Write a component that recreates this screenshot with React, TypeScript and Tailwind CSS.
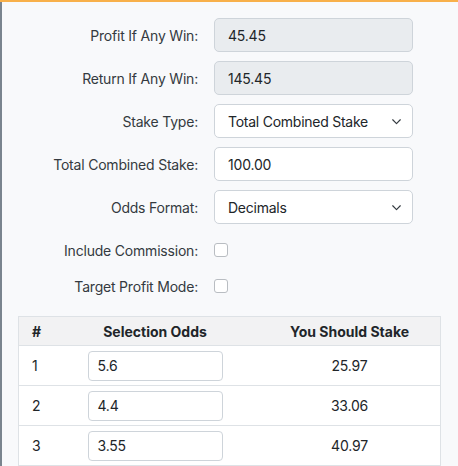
import React from 'react';

const font = { fontFamily: 'Inter, "Noto Sans", sans-serif' };

function ChevronDown() {
  return (
    <svg width="11" height="11" viewBox="0 0 16 16" fill="none" className="text-[#343a40]">
      <path d="M2.5 5.5l5.5 5.5 5.5-5.5" stroke="currentColor" strokeWidth="1.7" strokeLinecap="round" strokeLinejoin="round" />
    </svg>
  );
}

function FieldRow({ label, children }: { label: string; children: React.ReactNode }) {
  return (
    <div className="flex h-[34px] items-center">
      <div className="w-[196px] text-right text-[14px] tracking-[-0.2px] text-[#343a40]">{label}</div>
      <div className="ml-[16px] w-[199px]">{children}</div>
    </div>
  );
}

function ReadOnlyBox({ value }: { value: string }) {
  return (
    <div className="flex h-[34px] items-center rounded-[5px] border border-[#ced4da] bg-[#e9ecef] px-[13px] text-[14px] tracking-[-0.2px] text-[#212529]">
      {value}
    </div>
  );
}

function TextBox({ value }: { value: string }) {
  return (
    <div className="flex h-[34px] items-center rounded-[5px] border border-[#ced4da] bg-white px-[13px] text-[14px] tracking-[-0.2px] text-[#212529]">
      {value}
    </div>
  );
}

function SelectBox({ value }: { value: string }) {
  return (
    <div className="flex h-[34px] items-center justify-between rounded-[5px] border border-[#ced4da] bg-white pl-[13px] pr-[10px] text-[14px] tracking-[-0.25px] text-[#212529]">
      <span>{value}</span>
      <ChevronDown />
    </div>
  );
}

function CheckRow({ label }: { label: string }) {
  return (
    <div className="flex h-[20px] items-center">
      <div className="w-[196px] text-right text-[14px] tracking-[-0.2px] text-[#343a40]">{label}</div>
      <div className="ml-[16px] h-[14px] w-[14px] rounded-[3px] border border-[#b9bdc2] bg-white" />
    </div>
  );
}

const rows = [
  { n: 1, odds: '5.6', stake: '25.97' },
  { n: 2, odds: '4.4', stake: '33.06' },
  { n: 3, odds: '3.55', stake: '40.97' },
];

export default function App() {
  return (
    <div className="flex h-[466px] w-[458px] flex-col overflow-hidden bg-[#f8f9fb]" style={font}>
      <div className="h-[2px] w-full bg-[#f8b04a]" />
      <div className="flex flex-1">
        <div className="w-[2px] bg-[#7a848e]" />
        <div className="flex flex-1 flex-col pt-[16px]">
          <div className="flex flex-col gap-[9px]">
            <FieldRow label="Profit If Any Win:">
              <ReadOnlyBox value="45.45" />
            </FieldRow>
            <FieldRow label="Return If Any Win:">
              <ReadOnlyBox value="145.45" />
            </FieldRow>
            <FieldRow label="Stake Type:">
              <SelectBox value="Total Combined Stake" />
            </FieldRow>
            <FieldRow label="Total Combined Stake:">
              <TextBox value="100.00" />
            </FieldRow>
            <FieldRow label="Odds Format:">
              <SelectBox value="Decimals" />
            </FieldRow>
          </div>
          <div className="mt-[16px] flex flex-col gap-[16px]">
            <CheckRow label="Include Commission:" />
            <CheckRow label="Target Profit Mode:" />
          </div>
          <div className="ml-[16px] mt-[20px] w-[423px] border border-b-0 border-[#dee2e6] text-[14px] text-[#212529]">
            <div className="flex h-[29px] items-center border-b border-[#dee2e6] bg-[#f2f2f3] font-bold">
              <div className="w-[56px] pl-[13px]">#</div>
              <div className="w-[160px] text-center">Selection Odds</div>
              <div className="flex-1 pl-[24px] text-center">You Should Stake</div>
            </div>
            {rows.map((r) => (
              <div key={r.n} className="flex h-[40px] items-center border-b border-[#dee2e6] bg-white tracking-[-0.2px]">
                <div className="w-[56px] pl-[13px]">{r.n}</div>
                <div className="flex w-[160px] justify-center">
                  <div className="flex h-[30px] w-[135px] items-center rounded-[4px] border border-[#ced4da] bg-white px-[9px]">
                    {r.odds}
                  </div>
                </div>
                <div className="flex-1 pl-[24px] text-center">{r.stake}</div>
              </div>
            ))}
          </div>
        </div>
      </div>
    </div>
  );
}
